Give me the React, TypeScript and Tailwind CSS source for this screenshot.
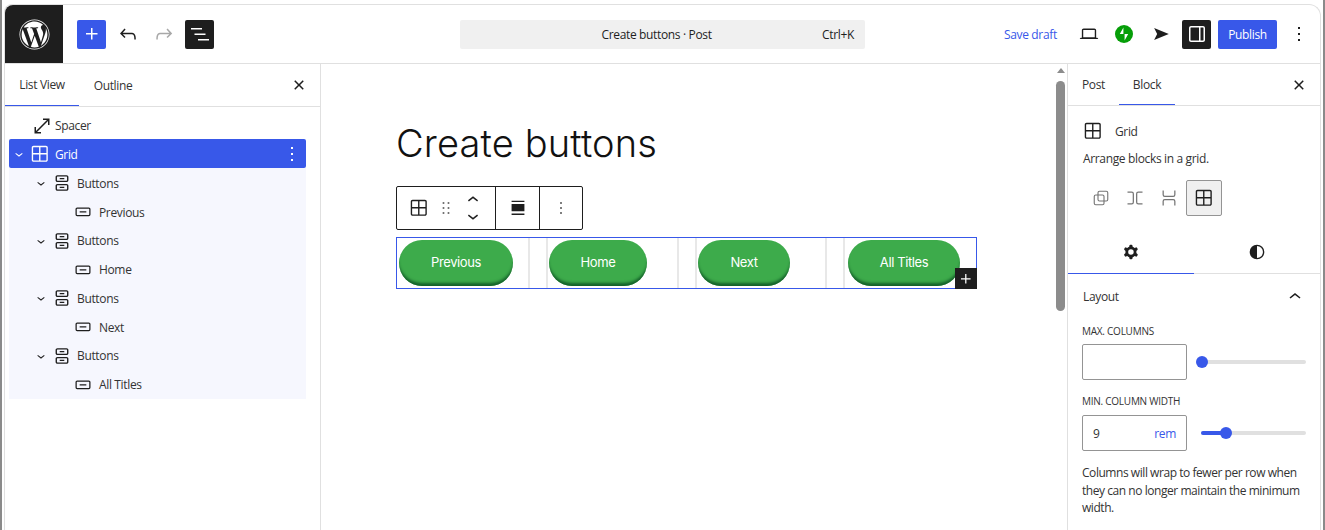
import React from 'react';
import { FaWordpress } from 'react-icons/fa';

const P = {
  plus: 'M11 12.5V17.5H12.5V12.5H17.5V11H12.5V6H11V11H6V12.5H11Z',
  undo: 'M18.3 11.7c-.6-.6-1.4-.9-2.3-.9H6.7l2.9-3.3-1.1-1-4.5 5L8.5 16l1-1-2.7-2.7H16c.5 0 .9.2 1.3.5 1 1 1 3.4 1 4.5v.3h1.5v-.2c0-1.5 0-4.3-1.5-5.7z',
  redo: 'M15.6 6.5l-1.1 1 2.9 3.3H8c-.9 0-1.7.3-2.3.9-1.4 1.5-1.4 4.2-1.4 5.6v.2h1.5v-.3c0-1.1 0-3.5 1-4.5.3-.3.7-.5 1.3-.5h9.2L14.5 15l1.1 1.1 4.6-4.6-4.6-5z',
  list: 'M3 6h11v1.5H3V6Zm3.5 5.5h11V13h-11v-1.5ZM21 17H10v1.5h11V17Z',
  close: 'M12 13.06l3.712 3.713 1.061-1.06L13.061 12l3.712-3.712-1.06-1.06L12 10.938 8.288 7.227l-1.061 1.06L10.939 12l-3.712 3.712 1.06 1.061L12 13.061z',
  more: 'M13 19h-2v-2h2v2zm0-6h-2v-2h2v2zm0-6h-2V5h2v2z',
  grid: 'M3 5c0-1.10457.89543-2 2-2h13.5c1.1046 0 2 .89543 2 2v13.5c0 1.1046-.8954 2-2 2h-13.5c-1.10457 0-2-.8954-2-2zm2-.5h6v6.5h-6.5v-6c0-.27614.22386-.5.5-.5zm-.5 8v6c0 .2761.22386.5.5.5h6v-6.5zm8 0v6.5h6c.2761 0 .5-.2239.5-.5v-6zm0-8v6.5h6.5v-6c0-.27614-.2239-.5-.5-.5z',
  laptop: 'M20.5 16h-.7V8c0-1.1-.9-2-2-2H6.2c-1.1 0-2 .9-2 2v8h-.7c-.8 0-1.5.7-1.5 1.5h20c0-.8-.7-1.5-1.5-1.5zM5.7 8c0-.3.2-.5.5-.5h11.6c.3 0 .5.2.5.5v7.6H5.7V8z',
  send: 'M4.5 5.5 20.5 12 4.5 18.5 7.8 12Z',
  drawer: 'M18 4H6c-1.1 0-2 .9-2 2v12c0 1.1.9 2 2 2h12c1.1 0 2-.9 2-2V6c0-1.1-.9-2-2-2zm-4 14.5H6c-.3 0-.5-.2-.5-.5V6c0-.3.2-.5.5-.5h8v13zm4.5-.5c0 .3-.2.5-.5.5h-2.5v-13H18c.3 0 .5.2.5.5v12z',
  down: 'M17.5 11.6L12 16l-5.5-4.4.9-1.2L12 14l4.5-3.6 1 1.2z',
  up: 'M6.5 12.4L12 8l5.5 4.4-.9 1.2L12 10l-4.5 3.6-1-1.2z',
  drag: 'M8 7h2V5H8v2zm0 6h2v-2H8v2zm0 6h2v-2H8v2zm6-14v2h2V5h-2zm0 8h2v-2h-2v2zm0 6h2v-2h-2v2z',
  align: 'M5 4h14v1.5H5V4Zm0 3.5h14v8H5v-8ZM5 18h14v1.5H5V18Z',
  buttons: 'M14.5 17.5H9.5V16H14.5V17.5Z M14.5 8H9.5V6.5H14.5V8Z M7 3.5H17C18.1046 3.5 19 4.39543 19 5.5V9C19 10.1046 18.1046 11 17 11H7C5.89543 11 5 10.1046 5 9V5.5C5 4.39543 5.89543 3.5 7 3.5ZM17 5H7C6.72386 5 6.5 5.22386 6.5 5.5V9C6.5 9.27614 6.72386 9.5 7 9.5H17C17.2761 9.5 17.5 9.27614 17.5 9V5.5C17.5 5.22386 17.2761 5 17 5Z M7 13H17C18.1046 13 19 13.8954 19 15V18.5C19 19.6046 18.1046 20.5 17 20.5H7C5.89543 20.5 5 19.6046 5 18.5V15C5 13.8954 5.89543 13 7 13ZM17 14.5H7C6.72386 14.5 6.5 14.7239 6.5 15V18.5C6.5 18.7761 6.72386 19 7 19H17C17.2761 19 17.5 18.7761 17.5 18.5V15C17.5 14.7239 17.2761 14.5 17 14.5Z',
  button: 'M8 12.5h8V11H8v1.5Z M19 6.5H5a2 2 0 0 0-2 2V15a2 2 0 0 0 2 2h14a2 2 0 0 0 2-2V8.5a2 2 0 0 0-2-2ZM5 8h14a.5.5 0 0 1 .5.5V15a.5.5 0 0 1-.5.5H5a.5.5 0 0 1-.5-.5V8.5A.5.5 0 0 1 5 8Z',
  cog: 'M10.289 4.836A1 1 0 0 1 11.275 4h1.306a1 1 0 0 1 .987.836l.244 1.466c.787.26 1.503.679 2.108 1.218l1.393-.522a1 1 0 0 1 1.216.437l.653 1.13a1 1 0 0 1-.23 1.273l-1.148.944a6.025 6.025 0 0 1 0 2.435l1.149.946a1 1 0 0 1 .23 1.272l-.653 1.13a1 1 0 0 1-1.216.437l-1.394-.522c-.605.54-1.32.958-2.108 1.218l-.244 1.466a1 1 0 0 1-.987.836h-1.306a1 1 0 0 1-.986-.836l-.244-1.466a5.995 5.995 0 0 1-2.108-1.218l-1.394.522a1 1 0 0 1-1.217-.436l-.653-1.131a1 1 0 0 1 .23-1.272l1.149-.946a6.026 6.026 0 0 1 0-2.435l-1.148-.944a1 1 0 0 1-.23-1.272l.653-1.131a1 1 0 0 1 1.217-.437l1.393.522a5.994 5.994 0 0 1 2.108-1.218l.244-1.466ZM14.929 12a3 3 0 1 1-6 0 3 3 0 0 1 6 0Z',
  half: 'M12 4a8 8 0 1 0 0 16 8 8 0 0 0 0-16zm0 1.5a6.5 6.5 0 0 1 0 13v-13z',
  spacer: 'M13 4.5h6.5V11H18V7.06L7.06 18H11v1.5H4.5V13H6v3.94L16.94 6H13V4.5Z',
};

const Icon: React.FC<{ d: string; className?: string }> = ({ d, className }) => (
  <svg viewBox="0 0 24 24" fill="currentColor" fillRule="evenodd" clipRule="evenodd" className={className}>
    <path d={d} />
  </svg>
);

const treeRows = [
  { label: 'Buttons', child: false },
  { label: 'Previous', child: true },
  { label: 'Buttons', child: false },
  { label: 'Home', child: true },
  { label: 'Buttons', child: false },
  { label: 'Next', child: true },
  { label: 'Buttons', child: false },
  { label: 'All Titles', child: true },
];

const canvasButtons = [
  { label: 'Previous', width: 'w-[114px]', cell: 'border-r-2 py-[2px] pl-[2px]' },
  { label: 'Home', width: 'w-[98px]', cell: 'border-x-2 py-[2px] pl-[1.25px]' },
  { label: 'Next', width: 'w-[92px]', cell: 'border-x-2 py-[2px] pl-[1.5px]' },
  { label: 'All Titles', width: 'w-[112px]', cell: 'border-l-2 py-[2px] pl-[2.75px]' },
];

const Header = () => (
  <header className="flex h-[59px] shrink-0 items-start border-b border-[#e0e0e0]">
    <div className="flex h-[58px] w-[58px] shrink-0 items-center justify-center rounded-tl-lg bg-[#1e1e1e] text-white">
      <FaWordpress className="h-[31px] w-[31px]" />
    </div>
    <div className="flex h-[58px] flex-1 items-center pl-[14px] pr-[6px]">
      <button className="flex h-[29px] w-[29px] items-center justify-center rounded-[2px] bg-[#3858e9] text-white">
        <Icon d={P.plus} className="h-6 w-6" />
      </button>
      <Icon d={P.undo} className="ml-[10px] h-6 w-6 text-[#1e1e1e]" />
      <Icon d={P.redo} className="ml-[12px] h-6 w-6 text-[#a8a8a8]" />
      <button className="ml-[9px] flex h-[29px] w-[29px] items-center justify-center rounded-[2px] bg-[#1e1e1e] text-white">
        <Icon d={P.list} className="h-6 w-6" />
      </button>
      <div className="ml-[246px] flex h-[29px] w-[405px] items-center rounded-[2px] bg-[#f0f0f0] pr-[11px] pt-px text-[#1e1e1e]">
        <span className="flex-1 pl-[31px] text-center">Create buttons · Post</span>
        <span>Ctrl+K</span>
      </div>
      <span className="ml-[139px] w-[52px] whitespace-nowrap pt-px text-[#3858e9]">Save draft</span>
      <Icon d={P.laptop} className="ml-[22px] h-[22px] w-[22px] text-[#1e1e1e]" />
      <svg viewBox="0 0 18 18" className="ml-[15px] h-[18px] w-[18px]">
        <circle cx="9" cy="9" r="9" fill="#069e08" />
        <path d="M9.6 2.5v6.6h3.6L9.6 15.5Z M8.4 15.5V8.9H4.8L8.4 2.5Z" fill="#fff" />
      </svg>
      <Icon d={P.send} className="ml-[17px] h-[22px] w-[22px] text-[#1e1e1e]" />
      <button className="ml-[10px] flex h-[29px] w-[29px] items-center justify-center rounded-[2px] bg-[#1e1e1e] text-white">
        <Icon d={P.drawer} className="h-6 w-6" />
      </button>
      <button className="ml-[7px] h-[29px] w-[59px] rounded-[2px] bg-[#3858e9] pt-px text-white">Publish</button>
      <Icon d={P.more} className="ml-[10px] h-6 w-6 text-[#1e1e1e]" />
    </div>
  </header>
);

const ListPanel = () => (
  <aside className="w-[316px] shrink-0 border-r border-[#e0e0e0]">
    <div className="flex h-[43px] items-stretch border-b border-[#e0e0e0]">
      <div className="flex w-[74px] items-center justify-center border-b border-[#3858e9] pt-px">List View</div>
      <div className="flex w-[68px] items-center justify-center pt-px">Outline</div>
      <Icon d={P.close} className="my-auto ml-[140px] h-6 w-6 text-[#1e1e1e]" />
    </div>
    <div className="flex h-[32px] items-center pl-[25px] pt-[5px]">
      <Icon d={P.spacer} className="h-6 w-6 text-[#1e1e1e]" />
      <span className="ml-[1px] pt-px">Spacer</span>
    </div>
    <div className="ml-[4px] w-[297px]">
      <div className="flex h-[29px] items-center rounded-[2px] bg-[#3858e9] text-white">
        <Icon d={P.down} className="ml-[2px] h-4 w-4" />
        <Icon d={P.grid} className="ml-[2px] h-[22px] w-[22px]" />
        <span className="ml-[4px] pt-[2px]">Grid</span>
        <Icon d={P.more} className="ml-auto mr-[2px] h-6 w-6" />
      </div>
      <div className="h-[231px] bg-[#f6f7fe] pt-[1px]">
        {treeRows.map((row, i) => (
          <div key={i} className="flex h-[28.75px] items-center">
            {row.child ? (
              <>
                <Icon d={P.button} className="ml-[64px] h-[20px] w-[20px] text-[#1e1e1e]" />
                <span className="ml-[6px] pt-px">{row.label}</span>
              </>
            ) : (
              <>
                <Icon d={P.down} className="ml-[24px] h-4 w-4 text-[#1e1e1e]" />
                <Icon d={P.buttons} className="ml-[2px] h-[22px] w-[22px] text-[#1e1e1e]" />
                <span className="ml-[4px] pt-px">{row.label}</span>
              </>
            )}
          </div>
        ))}
      </div>
    </div>
  </aside>
);

const Canvas = () => (
  <main className="relative flex-1 pl-[75px] pt-[50px] font-['Inter',sans-serif] tracking-normal">
    <h1 className="h-[58px] text-[38px] font-[350] leading-[58px] tracking-[0.15px] text-[#111]">Create buttons</h1>
    <div className="mt-[14px] flex h-[44px] w-[187px] rounded-[2px] border border-[#1e1e1e] bg-white text-[#1e1e1e]">
      <div className="flex w-[99px] items-center border-r border-[#1e1e1e] pl-[11px]">
        <Icon d={P.grid} className="h-[22px] w-[22px]" />
        <Icon d={P.drag} className="ml-[6px] h-[20px] w-[20px] text-[#444]" />
        <div className="ml-[6px] flex flex-col">
          <Icon d={P.up} className="mb-[-3px] h-[22px] w-[22px]" />
          <Icon d={P.down} className="mt-[-3px] h-[22px] w-[22px]" />
        </div>
      </div>
      <div className="flex w-[44px] items-center justify-center border-r border-[#1e1e1e]">
        <Icon d={P.align} className="h-[22px] w-[22px]" />
      </div>
      <div className="flex flex-1 items-center justify-center">
        <Icon d={P.more} className="h-5 w-5 text-[#333]" />
      </div>
    </div>
    <div className="relative mt-[7px] grid h-[52px] w-[581px] grid-cols-4 gap-[16px] border border-[#3858e9]">
      {canvasButtons.map((b) => (
        <div key={b.label} className={`border-[#e8e8e8] ${b.cell}`}>
          <div className={`flex h-[46px] items-center justify-center rounded-full bg-[#3dab4b] text-[13px] tracking-[-0.4px] text-white shadow-[inset_0_-4px_3px_-1px_#14602a] ${b.width}`}>
            {b.label}
          </div>
        </div>
      ))}
      <div className="absolute -bottom-px -right-px flex h-[21px] w-[22px] items-center justify-center bg-[#1e1e1e] text-white">
        <Icon d={P.plus} className="h-[20px] w-[20px]" />
      </div>
    </div>
    {/* scrollbar */}
    <div className="absolute right-[2px] top-0 h-full w-[9px]">
      <div className="mx-auto mt-[4px] h-0 w-0 border-x-[4px] border-b-[5px] border-x-transparent border-b-[#8c8c8c]" />
      <div className="mt-[8px] h-[230px] w-[9px] rounded-full bg-[#8c8c8c]" />
    </div>
  </main>
);

const Slider: React.FC<{ fill: string; thumb: string }> = ({ fill, thumb }) => (
  <div className="relative ml-[14px] h-[4px] w-[105px] rounded-full bg-[#e0e0e0]">
    <div className={`h-[4px] rounded-full bg-[#3858e9] ${fill}`} />
    <div className={`absolute -top-[4px] h-[12px] w-[12px] rounded-full bg-[#3858e9] ${thumb}`} />
  </div>
);

const Settings = () => (
  <aside className="w-[253px] shrink-0 border-l border-[#e0e0e0]">
    <div className="flex h-[42px] items-stretch border-b border-[#e0e0e0]">
      <div className="flex w-[51px] items-center justify-center pt-px">Post</div>
      <div className="flex w-[56px] items-center justify-center border-b border-[#3858e9] pt-px">Block</div>
      <Icon d={P.close} className="my-auto ml-[112px] h-6 w-6 text-[#1e1e1e]" />
    </div>
    <div className="flex items-center pl-[14px] pt-[14px]">
      <Icon d={P.grid} className="h-[22px] w-[22px] text-[#1e1e1e]" />
      <span className="ml-[11px] pt-px">Grid</span>
    </div>
    <p className="mt-[8px] pl-[15px] leading-[18px]">Arrange blocks in a grid.</p>
    <div className="mt-[12px] flex items-center pl-[15px]">
      <div className="flex h-9 w-[35px] items-center justify-center text-[#757575]">
        <svg viewBox="0 0 24 24" fill="none" stroke="currentColor" strokeWidth="1.5" className="h-[18px] w-[18px]">
          <rect x="3" y="8" width="13" height="13" rx="2" />
          <rect x="8" y="3" width="13" height="13" rx="2" />
        </svg>
      </div>
      <div className="flex h-9 w-[34px] items-center justify-center text-[#757575]">
        <svg viewBox="0 0 24 24" fill="none" stroke="currentColor" strokeWidth="1.5" className="h-[20px] w-[20px]">
          <path d="M3 5h5a2 2 0 0 1 2 2v10a2 2 0 0 1-2 2H3M21 5h-5a2 2 0 0 0-2 2v10a2 2 0 0 0 2 2h5" />
        </svg>
      </div>
      <div className="flex h-9 w-[34px] items-center justify-center text-[#757575]">
        <svg viewBox="0 0 24 24" fill="none" stroke="currentColor" strokeWidth="1.5" className="h-[20px] w-[20px]">
          <path d="M5 3v5a2 2 0 0 0 2 2h10a2 2 0 0 0 2-2V3M5 21v-5a2 2 0 0 1 2-2h10a2 2 0 0 1 2 2v5" />
        </svg>
      </div>
      <div className="flex h-9 w-9 items-center justify-center rounded-[2px] border border-[#949494] bg-[#f0f0f0] text-[#1e1e1e]">
        <Icon d={P.grid} className="h-[22px] w-[22px]" />
      </div>
    </div>
    <div className="mt-[15px] flex h-[43px] border-b border-[#e0e0e0] text-[#1e1e1e]">
      <div className="-mb-px flex w-[126px] items-center justify-center border-b border-[#3858e9]">
        <Icon d={P.cog} className="h-[22px] w-[22px]" />
      </div>
      <div className="flex w-[126px] items-center justify-center">
        <Icon d={P.half} className="h-[22px] w-[22px]" />
      </div>
    </div>
    <div className="px-[14px]">
      <div className="flex h-[45px] items-center">
        <span className="pl-px pt-px">Layout</span>
        <Icon d={P.up} className="ml-auto mr-[-1px] h-6 w-6 text-[#1e1e1e]" />
      </div>
      <div className="mt-[3px] h-4 pt-px text-[10px] leading-[16px] tracking-[-0.25px] uppercase">Max. Columns</div>
      <div className="mt-[6px] flex items-center">
        <div className="h-9 w-[105px] rounded-[2px] border border-[#949494]" />
        <Slider fill="w-0" thumb="left-[-5px]" />
      </div>
      <div className="mt-[12px] h-4 pt-px text-[10px] leading-[16px] tracking-[-0.25px] uppercase">Min. Column Width</div>
      <div className="mt-[7px] flex items-center">
        <div className="flex h-9 w-[105px] items-center justify-between rounded-[2px] border border-[#949494] pl-[10px] pr-[10px] pt-px">
          <span>9</span>
          <span className="text-[#3858e9]">rem</span>
        </div>
        <Slider fill="w-[25px]" thumb="left-[19px]" />
      </div>
      <p className="mt-[13px] w-[226px] leading-[17.5px] tracking-[-0.45px]">Columns will wrap to fewer per row when they can no longer maintain the minimum width.</p>
    </div>
  </aside>
);

const App: React.FC = () => (
  <div className="flex h-[530px] w-[1325px] overflow-hidden bg-white font-['Open_Sans',sans-serif] text-[12px] tracking-[-0.35px] text-[#333]">
    <div className="w-[2px] shrink-0 bg-[#8a8a8a]" />
    <div className="w-[2px] shrink-0" />
    <div className="mt-[4px] flex w-[1317px] shrink-0 flex-col rounded-t-xl rounded-tl-lg border-x border-t border-[#e0e0e0]">
      <Header />
      <div className="flex min-h-0 flex-1">
        <ListPanel />
        <Canvas />
        <Settings />
      </div>
    </div>
    <div className="ml-[2px] w-[2px] shrink-0 bg-[#8a8a8a]" />
  </div>
);

export default App;
